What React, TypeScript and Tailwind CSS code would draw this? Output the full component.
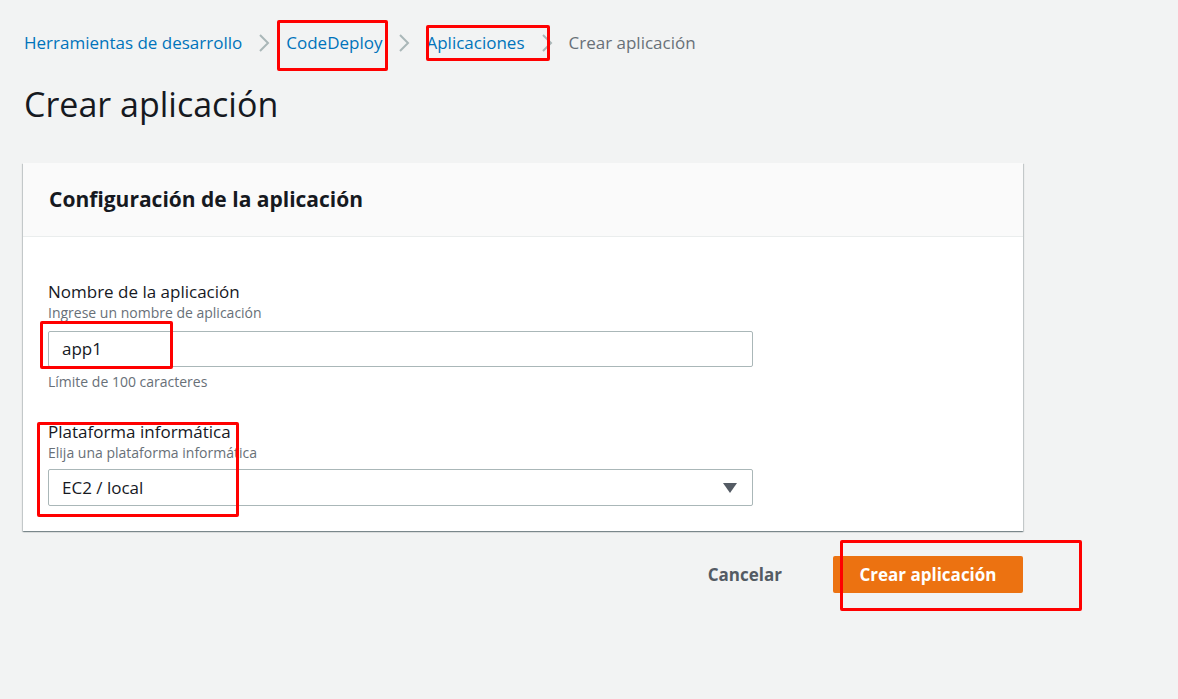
import React from "react";

const font = { fontFamily: '"Open Sans", "Noto Sans", Arial, sans-serif' };

const Chevron = () => (
  <svg width="12" height="20" viewBox="0 0 12 20" className="mx-[16px]">
    <path d="M2 2 L10 10 L2 18" fill="none" stroke="#aab7b8" strokeWidth="2" />
  </svg>
);

const marks = [
  "left-[277px] top-[20px] w-[111px] h-[51px]",
  "left-[426px] top-[25px] w-[124px] h-[36px]",
  "left-[40px] top-[321px] w-[133px] h-[48px]",
  "left-[37px] top-[422px] w-[202px] h-[95px]",
  "left-[840px] top-[540px] w-[242px] h-[71px]",
];

const App = () => {
  return (
    <div className="relative w-[1178px] h-[699px] bg-[#f2f3f3] text-[#16191f] overflow-hidden" style={font}>
      <div className="pl-[23px] pt-[30px]">
        <nav className="flex items-center h-[26px] text-[17px] pl-[1px]">
          <span className="text-[#0073bb]">Herramientas de desarrollo</span>
          <Chevron />
          <span className="text-[#0073bb]">CodeDeploy</span>
          <Chevron />
          <span className="text-[#0073bb]">Aplicaciones</span>
          <Chevron />
          <span className="text-[#687078]">Crear aplicación</span>
        </nav>
        <h1 className="mt-[28px] text-[34px] leading-[40px] font-normal pl-[1px]">Crear aplicación</h1>

        <div className="mt-[39px] w-[1000px] bg-white shadow-[0_1px_1px_0_rgba(0,28,36,0.3),1px_1px_1px_0_rgba(0,28,36,0.15),-1px_1px_1px_0_rgba(0,28,36,0.15)]">
          <div className="h-[74px] bg-[#fafafa] border-b border-[#eaeded] flex items-center px-[26px]">
            <h2 className="text-[21px] font-bold">Configuración de la aplicación</h2>
          </div>
          <div className="px-[25px] pt-[43px] pb-[25px]">
            <div className="w-[705px]">
              <div className="text-[17px] leading-[24px]">Nombre de la aplicación</div>
              <div className="text-[14px] leading-[18px] text-[#687078]">Ingrese un nombre de aplicación</div>
              <div className="mt-[9px] h-[36px] border border-[#aab7b8] rounded-[2px] flex items-center px-[13px] text-[17px]">
                app1
              </div>
              <div className="mt-[6px] text-[14px] leading-[18px] text-[#687078]">Límite de 100 caracteres</div>

              <div className="mt-[29px] text-[17px] leading-[24px]">Plataforma informática</div>
              <div className="text-[14px] leading-[18px] text-[#687078]">Elija una plataforma informática</div>
              <div className="mt-[7px] h-[37px] border border-[#aab7b8] rounded-[2px] flex items-center justify-between pl-[13px] pr-[15px] text-[17px]">
                <span>EC2 / local</span>
                <svg width="14" height="10" viewBox="0 0 14 10">
                  <path d="M0 0 L14 0 L7 10 Z" fill="#545b64" />
                </svg>
              </div>
            </div>
          </div>
        </div>

        <div className="w-[1000px] mt-[25px] flex justify-end items-center">
          <button className="text-[17px] font-bold text-[#545b64] mr-[51px]">Cancelar</button>
          <button className="w-[190px] h-[37px] bg-[#ec7211] rounded-[2px] text-white text-[17px] font-bold">
            Crear aplicación
          </button>
        </div>
      </div>

      {marks.map((m, i) => (
        <div key={i} className={`absolute ${m} border-[3px] border-[#ff0000] rounded-[2px] pointer-events-none`} />
      ))}
    </div>
  );
};

export default App;
